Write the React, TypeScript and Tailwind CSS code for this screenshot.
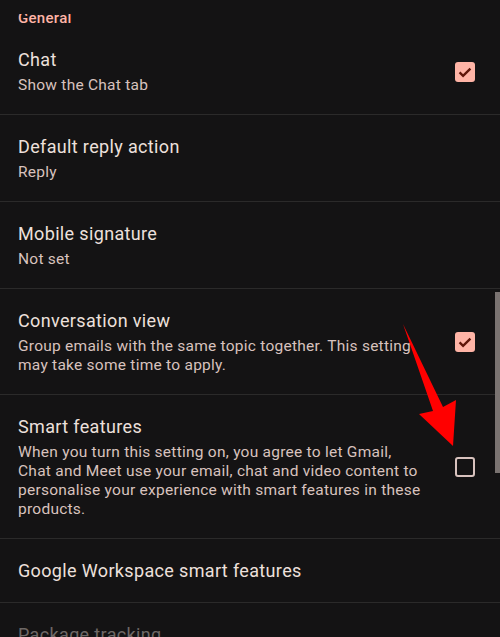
import type { ReactNode } from "react"

type Row = {
  title: string
  sub?: string
  check?: "on" | "off"
  disabled?: boolean
}

const rows: Row[] = [
  { title: "Chat", sub: "Show the Chat tab", check: "on" },
  { title: "Default reply action", sub: "Reply" },
  { title: "Mobile signature", sub: "Not set" },
  {
    title: "Conversation view",
    sub: "Group emails with the same topic together. This setting may take some time to apply.",
    check: "on",
  },
  {
    title: "Smart features",
    sub: "When you turn this setting on, you agree to let Gmail, Chat and Meet use your email, chat and video content to personalise your experience with smart features in these products.",
    check: "off",
  },
  { title: "Google Workspace smart features" },
  { title: "Package tracking", sub: "Show package tracking", disabled: true },
]

function Checkbox({ on }: { on: boolean }) {
  if (on) {
    return (
      <div className="flex size-5 items-center justify-center rounded-[3px] bg-[#ffb4a6]">
        <svg viewBox="0 0 24 24" className="size-5" fill="none">
          <path d="M5.5 12.5l4.2 4.2L18.5 8" stroke="#5f1609" strokeWidth="2.8" />
        </svg>
      </div>
    )
  }
  return <div className="size-5 rounded-[3px] border-2 border-[#d8c2be]" />
}

function SettingRow({ row }: { row: Row }): ReactNode {
  const single = !row.sub
  return (
    <div
      className={
        single
          ? "flex h-[64px] items-center border-b border-[#2b2a2a] pl-[18px] pr-[25px]"
          : "flex items-center border-b border-[#2b2a2a] pt-5 pb-[19px] pl-[18px] pr-[25px]"
      }
    >
      <div className="min-w-0 flex-1">
        <div
          className={
            row.disabled
              ? "text-[18px] leading-6 tracking-[0.35px] text-[#6e6866]"
              : "text-[18px] leading-6 tracking-[0.35px] text-[#ede0dc]"
          }
        >
          {row.title}
        </div>
        {row.sub && (
          <div
            className={
              row.disabled
                ? "mt-1 text-[15.5px] leading-[19px] tracking-[0.25px] text-[#6e6866]"
                : "mt-1 text-[15.5px] leading-[19px] tracking-[0.25px] text-[#d8c2be]"
            }
          >
            {row.sub}
          </div>
        )}
      </div>
      {row.check && (
        <div className="ml-[30px] shrink-0">
          <Checkbox on={row.check === "on"} />
        </div>
      )}
    </div>
  )
}

export default function App() {
  return (
    <div
      className="relative h-[637px] w-[500px] overflow-hidden bg-[#141314]"
      style={{ fontFamily: "Roboto, 'Noto Sans', sans-serif" }}
    >
      <div className="h-[14px]" />
      <div className="flex h-[12px] items-end overflow-hidden pl-[18px]">
        <span className="text-[15px] font-medium leading-4 tracking-[0.3px] text-[#ffb4a6]">
          General
        </span>
      </div>
      <div className="h-[2px]" />

      {rows.map((row) => (
        <SettingRow key={row.title} row={row} />
      ))}

      {/* scrollbar */}
      <div className="absolute right-0 top-[292px] h-[181px] w-[5px] bg-[#7a7371]" />

      {/* annotation arrow */}
      <svg className="pointer-events-none absolute inset-0" width="500" height="637">
        <polygon
          points="403,324 443,407 456,400 453,446 419,414 433,411"
          fill="#ff0000"
        />
      </svg>
    </div>
  )
}
